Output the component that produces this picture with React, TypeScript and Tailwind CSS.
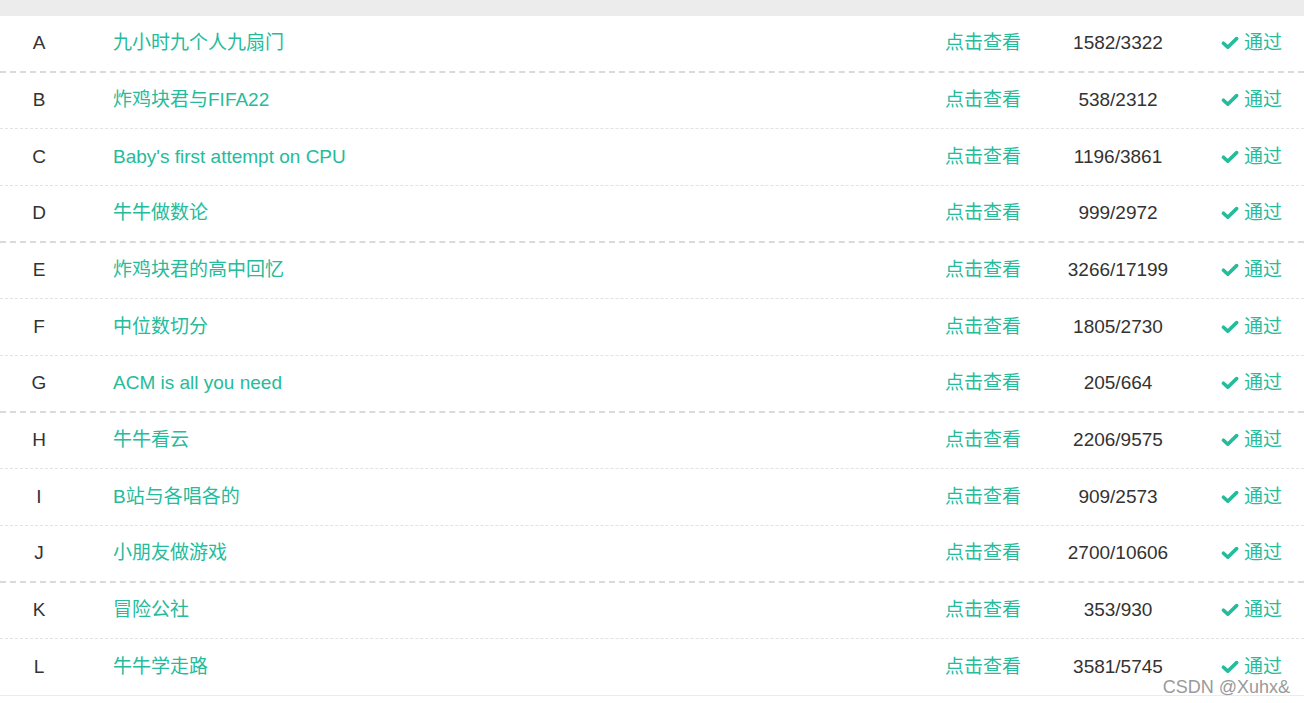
type Row = { id: string; title: string; count: string };

const ROWS: Row[] = [
  { id: "A", title: "九小时九个人九扇门", count: "1582/3322" },
  { id: "B", title: "炸鸡块君与FIFA22", count: "538/2312" },
  { id: "C", title: "Baby's first attempt on CPU", count: "1196/3861" },
  { id: "D", title: "牛牛做数论", count: "999/2972" },
  { id: "E", title: "炸鸡块君的高中回忆", count: "3266/17199" },
  { id: "F", title: "中位数切分", count: "1805/2730" },
  { id: "G", title: "ACM is all you need", count: "205/664" },
  { id: "H", title: "牛牛看云", count: "2206/9575" },
  { id: "I", title: "B站与各唱各的", count: "909/2573" },
  { id: "J", title: "小朋友做游戏", count: "2700/10606" },
  { id: "K", title: "冒险公社", count: "353/930" },
  { id: "L", title: "牛牛学走路", count: "3581/5745" },
];

function Check() {
  return (
    <svg viewBox="0 0 18 14" className="w-[18px] h-[14px]" aria-hidden="true">
      <path d="M2.5 7.2 L6.8 11.2 L15.6 2.6" fill="none" stroke="currentColor" strokeWidth="3.6" strokeLinecap="round" strokeLinejoin="round" />
    </svg>
  );
}

export default function App() {
  return (
    <div
      className="relative bg-white text-[19px] text-[#333]"
      style={{ fontFamily: '"Liberation Sans", "Noto Sans CJK SC", sans-serif' }}
    >
      <div className="h-[16px] bg-[#ececec]" />
      <div>
        {ROWS.map((r, i) => {
          // every third row the dashes come out heavier (stitched screenshot)
          const last = i === ROWS.length - 1;
          const heavy = i % 3 === 0;
          const border = last
            ? "border-b border-solid border-[#ebebeb]"
            : heavy
              ? "border-b-2 border-dashed border-[#dadada]"
              : "border-b border-dashed border-[#e3e3e3]";
          return (
            <div key={r.id} className={`flex items-center h-[56.67px] ${border}`}>
              <div className="w-[78px] text-center">{r.id}</div>
              <div className="flex-1 pl-[35px] text-[#25bb9b]">{r.title}</div>
              <div className="w-[150px] text-center text-[#25bb9b]">点击查看</div>
              <div className="w-[120px] text-center">{r.count}</div>
              <div className="w-[126px] flex items-center justify-end pr-[22px] gap-[5px] text-[#25bb9b]">
                <Check />
                <span>通过</span>
              </div>
            </div>
          );
        })}
      </div>
      <div className="absolute right-[14px] bottom-[-5px] text-[18px] text-[#9a9a9a]">CSDN @Xuhx&amp;</div>
    </div>
  );
}
